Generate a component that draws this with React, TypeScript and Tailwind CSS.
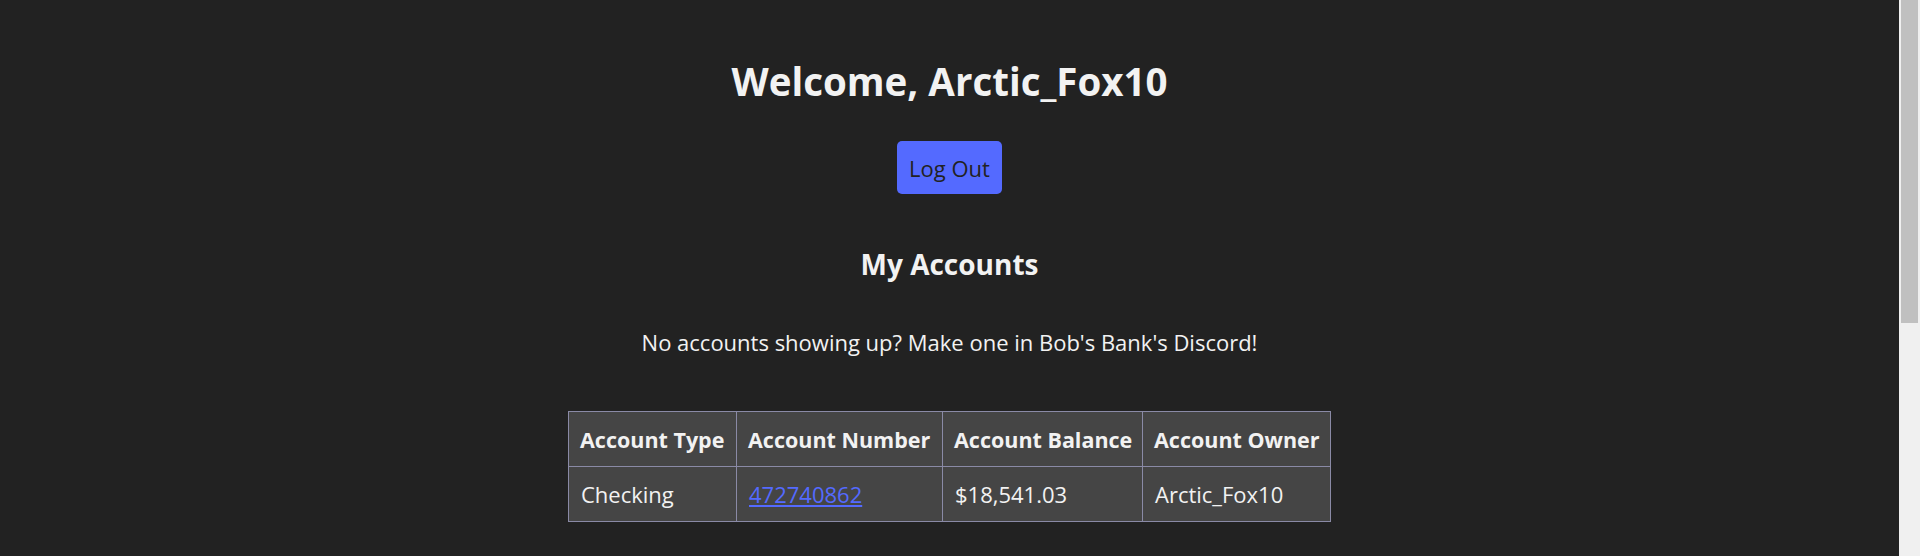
import React from "react";

const font = { fontFamily: '"Open Sans", "Noto Sans", sans-serif' };

export default function App() {
  return (
    <div className="flex h-screen w-full overflow-hidden bg-[#222222]" style={font}>
      <main className="flex flex-1 flex-col items-center text-[#f2f2f2]">
        <h1 className="mt-[57px] text-[38.5px] font-bold leading-[48px]">Welcome, Arctic_Fox10</h1>
        <button className="mt-[36px] rounded-[5px] bg-[#546aff] px-[12px] pt-[13px] pb-[11px] text-[22px] leading-[29px] text-[#222222]">
          Log Out
        </button>
        <h2 className="mt-[52px] text-[28px] font-bold leading-[36px]">My Accounts</h2>
        <p className="mt-[46px] text-[22px] leading-[29px]">
          No accounts showing up? Make one in Bob's Bank's Discord!
        </p>
        <table className="mt-[54px] w-[762px] table-fixed border-collapse border border-[#8a8aa6] bg-[#454545] text-left text-[22px] leading-[29px]">
          <thead>
            <tr className="h-[55px] text-[21.5px]">
              <th className="w-[168px] whitespace-nowrap border border-[#8a8aa6] px-[11px] font-bold">Account Type</th>
              <th className="w-[206px] whitespace-nowrap border border-[#8a8aa6] px-[11px] font-bold">Account Number</th>
              <th className="w-[200px] whitespace-nowrap border border-[#8a8aa6] px-[11px] font-bold">Account Balance</th>
              <th className="w-[188px] whitespace-nowrap border border-[#8a8aa6] px-[11px] font-bold">Account Owner</th>
            </tr>
          </thead>
          <tbody>
            <tr className="h-[55px]">
              <td className="whitespace-nowrap border border-[#8a8aa6] px-[12px]">Checking</td>
              <td className="whitespace-nowrap border border-[#8a8aa6] px-[12px]">
                <a href="#" className="text-[#546aff] underline">472740862</a>
              </td>
              <td className="whitespace-nowrap border border-[#8a8aa6] px-[12px]">$18,541.03</td>
              <td className="whitespace-nowrap border border-[#8a8aa6] px-[12px]">Arctic_Fox10</td>
            </tr>
          </tbody>
        </table>
      </main>
      <div className="h-full w-[21px] shrink-0 bg-[#f0f0f0] pl-[2px]">
        <div className="h-[323px] w-[17px] bg-[#c0c0c0]" />
      </div>
    </div>
  );
}
